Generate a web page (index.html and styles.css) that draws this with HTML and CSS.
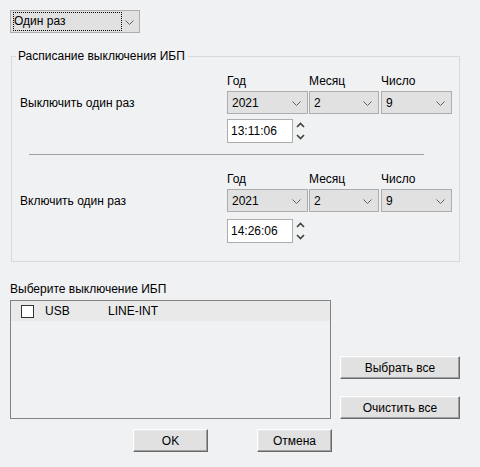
FILE: index.html
```html
<!DOCTYPE html>
<html lang="ru">
<head>
<meta charset="utf-8">
<link rel="stylesheet" href="styles.css">
</head>
<body>
<div class="page">
  <div class="combo top-combo">
    <span class="focus">Один раз</span>
    <svg class="arrow" width="9" height="5" viewBox="0 0 9 5"><path d="M0.5 0.5 L4.5 4.5 L8.5 0.5" fill="none" stroke="#606060" stroke-width="1"/></svg>
  </div>

  <fieldset class="group">
    <legend>Расписание выключения ИБП</legend>

    <div class="sched">
      <span class="cap cap-year">Год</span>
      <span class="cap">Месяц</span>
      <span class="cap">Число</span>
      <span class="rowlabel">Выключить один раз</span>
      <div class="combo c-year"><span>2021</span><svg class="arrow" width="9" height="5" viewBox="0 0 9 5"><path d="M0.5 0.5 L4.5 4.5 L8.5 0.5" fill="none" stroke="#606060"/></svg></div>
      <div class="combo c-month"><span>2</span><svg class="arrow" width="9" height="5" viewBox="0 0 9 5"><path d="M0.5 0.5 L4.5 4.5 L8.5 0.5" fill="none" stroke="#606060"/></svg></div>
      <div class="combo c-day"><span>9</span><svg class="arrow" width="9" height="5" viewBox="0 0 9 5"><path d="M0.5 0.5 L4.5 4.5 L8.5 0.5" fill="none" stroke="#606060"/></svg></div>
      <div class="timewrap">
        <div class="timebox">13:11:06</div>
        <svg class="spin" width="9" height="22" viewBox="0 0 9 22"><path d="M1 7 L4.5 3.5 L8 7" fill="none" stroke="#404040" stroke-width="1.6"/><path d="M1 15 L4.5 18.5 L8 15" fill="none" stroke="#404040" stroke-width="1.6"/></svg>
      </div>
    </div>

    <div class="sep"></div>

    <div class="sched sched2">
      <span class="cap cap-year">Год</span>
      <span class="cap">Месяц</span>
      <span class="cap">Число</span>
      <span class="rowlabel">Включить один раз</span>
      <div class="combo c-year"><span>2021</span><svg class="arrow" width="9" height="5" viewBox="0 0 9 5"><path d="M0.5 0.5 L4.5 4.5 L8.5 0.5" fill="none" stroke="#606060"/></svg></div>
      <div class="combo c-month"><span>2</span><svg class="arrow" width="9" height="5" viewBox="0 0 9 5"><path d="M0.5 0.5 L4.5 4.5 L8.5 0.5" fill="none" stroke="#606060"/></svg></div>
      <div class="combo c-day"><span>9</span><svg class="arrow" width="9" height="5" viewBox="0 0 9 5"><path d="M0.5 0.5 L4.5 4.5 L8.5 0.5" fill="none" stroke="#606060"/></svg></div>
      <div class="timewrap">
        <div class="timebox">14:26:06</div>
        <svg class="spin" width="9" height="22" viewBox="0 0 9 22"><path d="M1 7 L4.5 3.5 L8 7" fill="none" stroke="#404040" stroke-width="1.6"/><path d="M1 15 L4.5 18.5 L8 15" fill="none" stroke="#404040" stroke-width="1.6"/></svg>
      </div>
    </div>
  </fieldset>

  <div class="select-title">Выберите выключение ИБП</div>
  <div class="bottom">
    <div class="listbox">
      <div class="item">
        <span class="check"></span>
        <span class="col-usb">USB</span>
        <span>LINE-INT</span>
      </div>
    </div>
    <div class="side-buttons">
      <div class="btn wide">Выбрать все</div>
      <div class="btn wide">Очистить все</div>
    </div>
  </div>
  <div class="dialog-buttons">
    <div class="btn small">OK</div>
    <div class="btn small">Отмена</div>
  </div>
</div>
</body>
</html>
```

FILE: styles.css
```css
* { box-sizing: border-box; }
html, body {
  margin: 0;
  padding: 0;
  background: #f0f1f3;
}
body {
  font-family: "Liberation Sans", Arial, sans-serif;
  font-size: 12px;
  color: #000;
  width: 480px;
  height: 467px;
  overflow: hidden;
}
.page {
  padding: 10px 0 0 10px;
}
.combo {
  position: relative;
  display: flex;
  align-items: center;
  height: 23px;
  background: #e1e1e1;
  border: 1px solid #adadad;
  padding-left: 4px;
}
.combo .arrow {
  position: absolute;
  right: 6px;
  top: 9px;
}
.top-combo {
  width: 130px;
  padding-left: 2px;
}
.top-combo .focus {
  display: block;
  width: 109px;
  height: 19px;
  line-height: 17px;
  border: 1px dotted #000;
  padding-left: 0;
}
.top-combo .arrow { right: 5px; }

.group {
  margin: 16px 0 0 1px;
  width: 449px;
  height: 213px;
  border: 1px solid #d9d9d9;
  padding: 0 0 0 8px;
  min-width: 0;
}
.group legend {
  padding: 0 3px 0 2px;
  margin-left: -4px;
  line-height: 14px;
}
.sched {
  display: grid;
  grid-template-columns: 207px 82px 72px 71px;
  grid-template-rows: 14px 23px 23px;
  row-gap: 3px;
  margin-top: 11px;
  align-items: center;
}
.sched .cap { line-height: 14px; }
.cap-year { grid-column: 2; }
.rowlabel { grid-column: 1; grid-row: 2; }
.c-year { width: 81px; }
.c-month { width: 70px; }
.c-day { width: 71px; }
.timewrap {
  grid-column: 2 / span 3;
  grid-row: 3;
  display: flex;
  align-items: center;
  gap: 3px;
  margin-top: 4px;
}
.timebox {
  width: 66px;
  height: 24px;
  background: #fff;
  border: 1px solid #adadad;
  line-height: 22px;
  padding-left: 3px;
}
.spin { margin-top: 1px; }
.sep {
  margin: 14px 0 0 9px;
  width: 395px;
  height: 1px;
  background: #a0a0a0;
}
.sched2 { margin-top: 17px; }
.sched2 .timewrap { margin-top: 8px; }

.select-title {
  margin-top: 20px;
  line-height: 14px;
}
.bottom {
  display: flex;
  align-items: flex-end;
  gap: 9px;
  margin-top: 4px;
}
.listbox {
  width: 321px;
  height: 119px;
  border: 1px solid #828282;
  background: #f0f1f3;
}
.item {
  display: flex;
  align-items: center;
  height: 20px;
  background: #e9e9e9;
  padding-left: 10px;
}
.check {
  width: 13px;
  height: 13px;
  border: 1px solid #333;
  background: #fff;
  margin-right: 11px;
}
.col-usb { width: 63px; }
.side-buttons {
  display: flex;
  flex-direction: column;
  gap: 17px;
}
.btn {
  height: 23px;
  display: flex;
  align-items: center;
  justify-content: center;
  background: #e1e1e1;
  border: 1px solid;
  border-color: #fff #696969 #696969 #fff;
  box-shadow: inset -1px -1px 0 #a0a0a0, inset 1px 1px 0 #e8e8e8;
}
.wide { width: 120px; }
.small { width: 75px; }
.dialog-buttons {
  display: flex;
  gap: 49px;
  padding-left: 123px;
  margin-top: 10px;
}
```
